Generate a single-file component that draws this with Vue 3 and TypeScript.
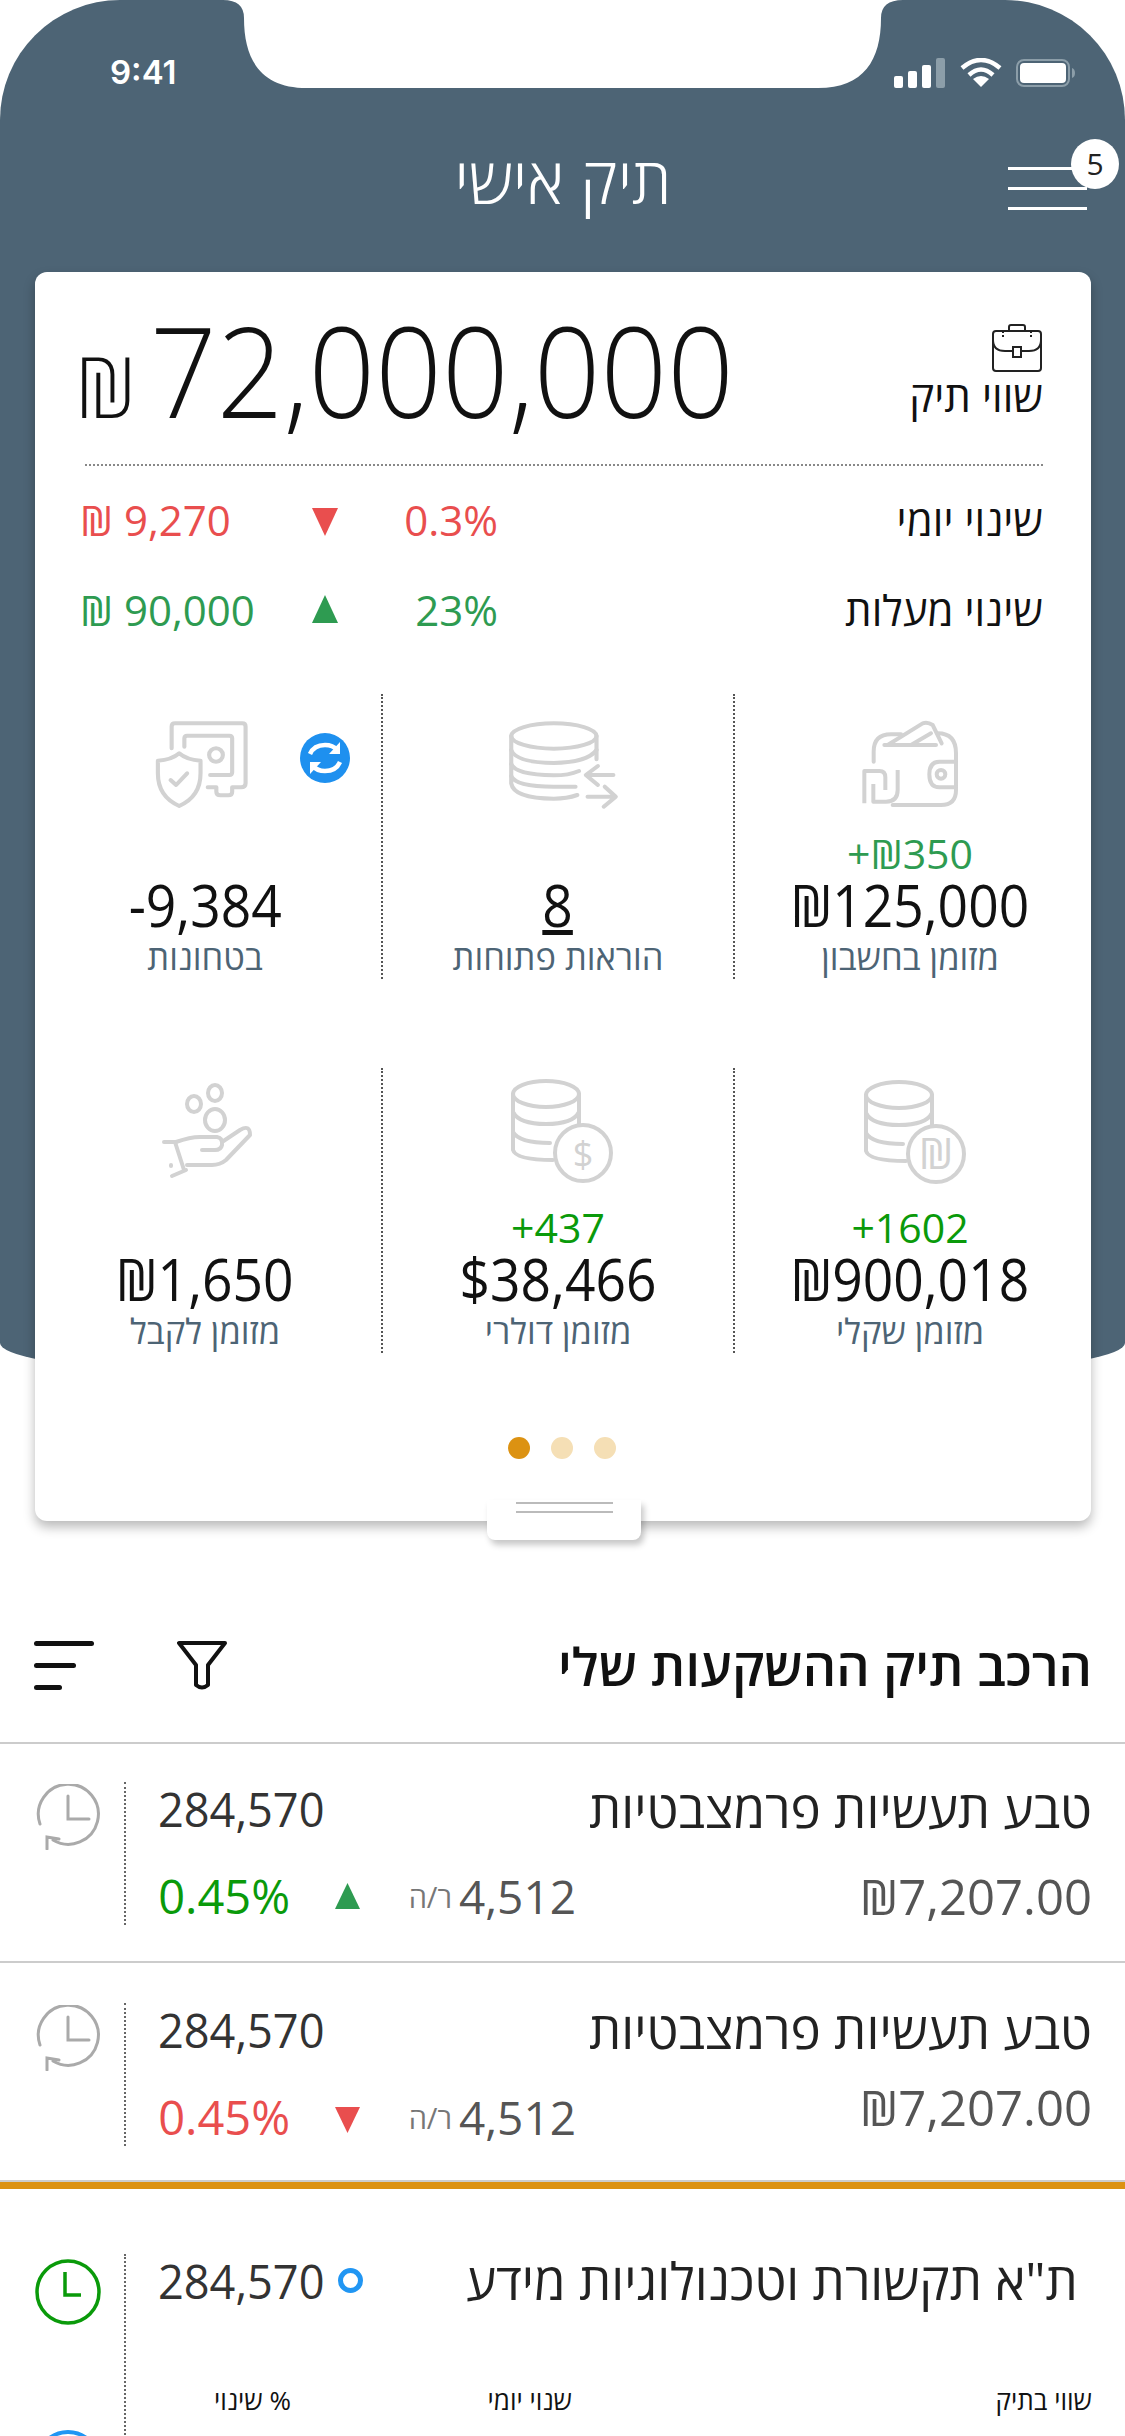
<script setup lang="ts">
interface Delta { label: string; pct: string; amount: string; dir: 'up' | 'down' }
interface Stat { icon: string; delta?: string; deltaClass?: string; value: string; label: string; link?: boolean; sync?: boolean }
interface Holding { name: string; units: string; worth: string; rate: string; pct: string; dir: 'up' | 'down'; raised?: boolean }

const deltas: Delta[] = [
  { label: 'שינוי יומי', pct: '0.3%', amount: '₪ 9,270', dir: 'down' },
  { label: 'שינוי מעלות', pct: '23%', amount: '₪ 90,000', dir: 'up' }
]

const stats: Stat[] = [
  { icon: 'wallet', delta: '+₪350', deltaClass: 'soft', value: '₪125,000', label: 'מזומן בחשבון' },
  { icon: 'orders', value: '8', label: 'הוראות פתוחות', link: true },
  { icon: 'safe', value: '-9,384', label: 'בטחונות', sync: true },
  { icon: 'ils', delta: '+1602', deltaClass: 'vivid', value: '₪900,018', label: 'מזומן שקלי' },
  { icon: 'usd', delta: '+437', deltaClass: 'vivid', value: '$38,466', label: 'מזומן דולרי' },
  { icon: 'hand', value: '₪1,650', label: 'מזומן לקבל' }
]

const holdings: Holding[] = [
  { name: 'טבע תעשיות פרמצבטיות', units: '284,570', worth: '₪7,207.00', rate: '4,512', pct: '0.45%', dir: 'up' },
  { name: 'טבע תעשיות פרמצבטיות', units: '284,570', worth: '₪7,207.00', rate: '4,512', pct: '0.45%', dir: 'down', raised: true }
]
</script>

<template>
  <div class="screen" dir="rtl">
    <header class="hero">
      <svg class="notch" viewBox="0 0 680 90" width="680" height="90">
        <path d="M0 0 Q21 0 21 18 C21 60 38 88 84 88 H595 C641 88 658 60 658 18 Q658 0 680 0 Z" fill="#fff" />
      </svg>

      <div class="status" dir="ltr">
        <span class="time">9:41</span>
        <div class="status-icons">
          <svg width="52" height="30" viewBox="0 0 52 30">
            <rect x="0" y="18" width="9" height="12" rx="2" fill="#fff" />
            <rect x="14" y="13" width="9" height="17" rx="2" fill="#fff" />
            <rect x="28" y="7" width="9" height="23" rx="2" fill="#fff" />
            <rect x="42" y="0" width="9" height="30" rx="2" fill="#8c9ea9" />
          </svg>
          <svg width="42" height="30" viewBox="0 0 42 30" fill="none" stroke="#fff" stroke-width="4.5">
            <path d="M2 10 Q21 -6 40 10" />
            <path d="M9 17 Q21 6 33 17" />
            <path d="M21 29 L13 21 Q21 15 29 21 Z" fill="#fff" stroke="none" />
          </svg>
          <svg width="60" height="30" viewBox="0 0 60 30">
            <rect x="1" y="2" width="52" height="26" rx="7" fill="none" stroke="#8c9ea9" stroke-width="2" />
            <rect x="4" y="5" width="46" height="20" rx="4" fill="#fff" />
            <path d="M56 10 Q59 11 59 15 Q59 19 56 20 Z" fill="#8c9ea9" />
          </svg>
        </div>
      </div>

      <nav class="nav" dir="ltr">
        <h1 class="title" dir="rtl">תיק אישי</h1>
        <div class="menu">
          <i></i><i></i><i></i>
          <span class="badge">5</span>
        </div>
      </nav>

      <section class="card">
        <div class="total">
          <div class="total-label">
            <svg width="52" height="48" viewBox="0 0 52 48" fill="none" stroke="#222" stroke-width="2">
              <path d="M18 7 V3 Q18 1 20 1 H32 Q34 1 34 3 V7" />
              <rect x="2" y="7" width="48" height="40" rx="3" />
              <path d="M2 16 Q2 27 14 27 H22 M30 27 H38 Q50 27 50 16" />
              <rect x="22" y="23" width="8" height="10" />
              <path d="M12 7 V13 M40 7 V13" stroke-dasharray="2 2" />
            </svg>
            <span>שווי תיק</span>
          </div>
          <div class="total-amount" dir="ltr"><span class="total-sign">₪</span><span class="total-digits">72,000,000</span></div>
        </div>

        <div v-for="d in deltas" :key="d.label" class="delta-row" :class="d.dir">
          <span class="delta-label">{{ d.label }}</span>
          <span class="delta-pct">{{ d.pct }}</span>
          <i class="tri" :class="d.dir"></i>
          <span class="delta-amount" dir="ltr">{{ d.amount }}</span>
        </div>

        <div class="stats">
          <div v-for="s in stats" :key="s.label" class="stat">
            <div class="stat-icon">
              <svg v-if="s.icon === 'wallet'" width="130" height="110" viewBox="72 60 390 330" fill="none" stroke="#d2d2d2" stroke-width="12" stroke-linecap="round" stroke-linejoin="round">
                <path d="M158 215 V185 Q158 133 210 133 H240" />
                <path d="M200 165 L305 100 Q320 95 335 105 L362 160 M270 165 L330 130 M190 165 H345" />
                <path d="M350 130 Q405 130 405 190 V300 Q405 345 360 345 H215" />
                <path d="M405 215 H355 Q325 215 325 253 Q325 292 355 292 H405" />
                <circle cx="360" cy="253" r="13" />
                <path d="M130 340 V243 H175 Q193 243 193 262 V300 M230 240 V300 Q230 335 195 335 H157 V282" stroke-linecap="butt" />
              </svg>
              <svg v-else-if="s.icon === 'orders'" width="130" height="110" viewBox="1080 60 378 330" preserveAspectRatio="none" fill="none" stroke="#d2d2d2" stroke-width="12" stroke-linecap="round" stroke-linejoin="round">
                <ellipse cx="1257" cy="138" rx="124" ry="38" />
                <path d="M1133 138 V280 Q1140 325 1257 326 Q1295 326 1325 315 M1381 138 V208" />
                <path d="M1133 180 Q1145 217 1257 219 Q1355 217 1381 180" />
                <path d="M1133 222 Q1145 254 1257 256 Q1300 256 1330 243" />
                <path d="M1133 258 Q1145 290 1257 290 H1320" />
                <path d="M1430 255 H1360 M1385 228 L1350 255 L1385 285 M1355 320 H1435 M1405 290 L1437 320 L1402 350" />
              </svg>
              <svg v-else-if="s.icon === 'safe'" width="130" height="110" viewBox="58 60 378 330" preserveAspectRatio="none" fill="none" stroke="#d2d2d2" stroke-width="12" stroke-linecap="round" stroke-linejoin="round">
                <path d="M150 175 V110 Q150 100 160 100 H355 Q365 100 365 110 V280 Q365 292 352 292 H326 V305 Q326 316 315 316 H292 Q280 316 280 305 V292 H255" />
                <path d="M187 170 V145 Q187 137 195 137 H318 Q326 137 326 145 V247 Q326 255 318 255 H262" />
                <circle cx="279" cy="195" r="20" />
                <path d="M172 190 Q150 210 110 212 V250 Q110 320 172 348 Q234 320 234 250 V212 Q194 210 172 190 Z" />
                <path d="M147 270 L163 285 L195 250" />
              </svg>
              <svg v-else-if="s.icon === 'hand'" width="130" height="110" viewBox="140 1075 130 110" fill="none" stroke="#d2d2d2" stroke-width="4" stroke-linecap="round" stroke-linejoin="round">
                <ellipse cx="215" cy="1093" rx="7" ry="8" />
                <ellipse cx="194" cy="1104" rx="7" ry="8" />
                <ellipse cx="215" cy="1120" rx="10" ry="11" />
                <path d="M164 1142 H175 L184 1170 M172 1176 L186 1170" />
                <path d="M176 1142 Q190 1137 200 1137 H217 Q223 1138 222 1145 Q221 1150 215 1150 H202" />
                <path d="M222 1142 L240 1130 Q250 1124 250 1135 L226 1160 Q220 1165 212 1165 H187" />
                <path d="M171 1165 V1166" />
              </svg>
              <svg v-else width="130" height="110" :viewBox="s.icon === 'usd' ? '492 1075 130 110' : '844 1075 130 110'" fill="none" stroke="#d2d2d2" stroke-width="4" stroke-linecap="round" stroke-linejoin="round">
                <g :transform="s.icon === 'usd' ? 'translate(0 0)' : 'translate(353 1)'">
                  <ellipse cx="545" cy="1094" rx="33" ry="13" />
                  <path d="M512 1094 V1150 Q515 1160 552 1160 M578 1094 V1128" />
                  <path d="M512 1112 Q518 1124 545 1124 Q572 1124 578 1112 M512 1132 Q518 1143 549 1143" />
                  <circle cx="582" cy="1153" r="28" fill="#fff" />
                  <text x="582" :y="s.icon === 'usd' ? 1167 : 1168" text-anchor="middle" class="coin-glyph" :class="{ big: s.icon === 'ils' }">{{ s.icon === 'usd' ? '$' : '₪' }}</text>
                </g>
              </svg>
            </div>
            <span v-if="s.sync" class="sync">
              <svg width="50" height="50" viewBox="0 0 50 50">
                <circle cx="25" cy="25" r="25" fill="#1e90ef" />
                <path d="M10 21 Q14 12 25 12 Q33 12 37 17" fill="none" stroke="#fff" stroke-width="4.5" />
                <path d="M40 9 V21 H29 Z" fill="#fff" />
                <path d="M40 29 Q36 38 25 38 Q17 38 13 33" fill="none" stroke="#fff" stroke-width="4.5" />
                <path d="M10 41 V29 H21 Z" fill="#fff" />
              </svg>
            </span>
            <span v-if="s.delta" class="stat-delta" :class="s.deltaClass" dir="ltr">{{ s.delta }}</span>
            <span class="stat-value" :class="{ link: s.link, lone: !s.delta }" dir="ltr">{{ s.value }}</span>
            <span class="stat-label">{{ s.label }}</span>
          </div>
        </div>

        <div class="dots" dir="ltr"><i class="on"></i><i></i><i></i></div>
        <div class="handle"><i></i><i></i></div>
      </section>
    </header>

    <div class="section-head">
      <h2>הרכב תיק ההשקעות שלי</h2>
      <div class="tools">
        <svg width="50" height="50" viewBox="0 0 50 50" fill="none" stroke="#111" stroke-width="4" stroke-linejoin="round">
          <path d="M2 3 H48 L31 25 V45 Q25 50 19 45 V25 Z" />
        </svg>
        <div class="sort"><i></i><i></i><i></i></div>
      </div>
    </div>

    <div v-for="(h, i) in holdings" :key="i" class="holding">
      <div class="holding-main">
        <div class="line">
          <span class="name">{{ h.name }}</span>
          <span class="units">{{ h.units }}</span>
        </div>
        <div class="line">
          <span class="worth" :class="{ raised: h.raised }" dir="ltr">{{ h.worth }}</span>
          <div class="rate-group" :class="h.dir">
            <span class="rate">{{ h.rate }}</span>
            <span class="per">ר/ה</span>
            <i class="tri small" :class="h.dir"></i>
            <span class="pct">{{ h.pct }}</span>
          </div>
        </div>
      </div>
      <div class="clock-cell">
        <svg width="64" height="66" viewBox="0 0 64 66" fill="none" stroke="#aaa" stroke-width="3" stroke-linecap="round">
          <path d="M17 56 A30 30 0 1 0 4 40" />
          <path d="M32 12 V35 H53" />
          <path d="M11 65 L11 53 L23 55" />
        </svg>
      </div>
    </div>

    <div class="holding active">
      <div class="holding-main">
        <div class="line">
          <span class="name">ת"א תקשורת וטכנולוגיות מידע</span>
          <div class="units-wrap">
            <i class="ring"></i>
            <span class="units">284,570</span>
          </div>
        </div>
        <div class="captions">
          <span>שווי בתיק</span>
          <span>שנוי יומי</span>
          <span>% שינוי</span>
        </div>
      </div>
      <div class="clock-cell">
        <svg width="66" height="66" viewBox="0 0 66 66" fill="none" stroke="#0a9a0a" stroke-width="3.5">
          <circle cx="33" cy="33" r="31" />
          <path d="M30 13 V36 H46" />
        </svg>
        <svg class="next-clock" width="66" height="66" viewBox="0 0 66 66" fill="none" stroke="#2196f3" stroke-width="4">
          <circle cx="33" cy="33" r="31" />
        </svg>
      </div>
    </div>
  </div>
</template>

<style>
html, body {
  margin: 0;
  background: #fff;
}
</style>

<style scoped>
.screen {
  position: relative;
  width: 1125px;
  height: 2436px;
  overflow: hidden;
  background: #fff;
  font-family: "Open Sans", "Liberation Sans", sans-serif;
  color: #111;
}
h1, h2 { margin: 0; font-weight: inherit; font-size: inherit; }
i { display: block; font-style: normal; }

.hero {
  position: relative;
  height: 1389px;
  padding: 0 34px 0 35px;
  box-sizing: border-box;
  background: #4d6475;
  border-radius: 120px 120px 50% 50% / 120px 120px 46px 46px;
}
.notch {
  position: absolute;
  top: 0;
  left: 223px;
}
.status {
  display: flex;
  justify-content: space-between;
  align-items: flex-end;
  height: 88px;
  padding: 0 15px 0 75px;
  color: #fff;
}
.time {
  font-family: Inter, "Liberation Sans", sans-serif;
  font-weight: 600;
  font-size: 33px;
  line-height: 32px;
}
.status-icons {
  display: flex;
  align-items: flex-end;
  gap: 14px;
}
.nav {
  position: relative;
  height: 184px;
  display: flex;
  justify-content: center;
}
.title {
  color: #fff;
  font-weight: 300;
  font-size: 64px;
  line-height: 60px;
  margin-top: 62px;
}
.menu {
  position: absolute;
  right: 4px;
  top: 79px;
  width: 79px;
  display: flex;
  flex-direction: column;
  gap: 17px;
}
.menu i {
  height: 3px;
  background: #fff;
}
.badge {
  position: absolute;
  right: -32px;
  top: -28px;
  width: 48px;
  height: 50px;
  border-radius: 50%;
  background: #fff;
  color: #222;
  font-size: 30px;
  line-height: 50px;
  text-align: center;
}

.card {
  position: relative;
  height: 1249px;
  padding: 0 48px 0 45px;
  box-sizing: border-box;
  background: #fff;
  border-radius: 12px;
  box-shadow: 0 6px 12px rgba(0, 0, 0, 0.28);
}
.total {
  display: flex;
  justify-content: space-between;
  align-items: flex-end;
  height: 194px;
  padding: 0 0 14px 5px;
  box-sizing: border-box;
  border-bottom: 2px dotted #888;
  margin-left: 5px;
}
.total-label {
  display: flex;
  flex-direction: column;
  align-items: flex-start;
  font-size: 42px;
  line-height: 52px;
  padding-bottom: 28px;
}
.total-label svg { margin-bottom: -2px; }
.total-amount {
  font-weight: 300;
  font-size: 125px;
  line-height: 130px;
  margin-left: -15px;
}
.total-sign { font-size: 85px; }
.total-digits {
  display: inline-block;
  margin-left: 14px;
  transform: scaleX(0.935);
  transform-origin: left center;
}

.delta-row {
  display: grid;
  grid-template-columns: 545px 160px 26px 1fr;
  align-items: center;
  height: 90px;
  font-size: 42px;
}
.delta-row.down { color: #e94e4e; margin-top: 8px; }
.delta-row.up { color: #2e9b51; }
.delta-label { color: #111; }
.delta-pct, .delta-amount { font-weight: 500; }
.delta-amount { text-align: left; }

.tri {
  width: 26px;
  height: 28px;
  background: currentColor;
}
.tri.down { clip-path: polygon(0 0, 100% 0, 50% 100%); margin-top: 6px; }
.tri.up { clip-path: polygon(50% 0, 100% 100%, 0 100%); }
.tri.small { width: 25px; height: 26px; }

.stats {
  display: grid;
  grid-template-columns: repeat(3, 352px);
  grid-auto-rows: 285px;
  row-gap: 89px;
  margin: 40px -42px 0 -51px;
  justify-content: center;
}
.stat {
  position: relative;
  display: flex;
  flex-direction: column;
  align-items: center;
  border-left: 2px dotted #555;
  padding-top: 16px;
  padding-bottom: 3px;
}
.stat:nth-child(3n) { border-left: none; }
.stat:nth-child(n+4) { padding-top: 7px; }
.stat-icon { height: 110px; }
.stat-delta {
  margin-top: auto;
  font-size: 41px;
  line-height: 44px;
}
.stat-delta.soft { color: #2e9b51; }
.stat-delta.vivid { color: #0a9a0a; }
.stat-value {
  font-size: 58px;
  line-height: 60px;
  margin-bottom: 3px;
  transform: scaleX(0.92);
}
.stat-value.lone { margin-top: auto; }
.stat-value.link { text-decoration: underline; }
.stat-label {
  color: #4d6475;
  font-size: 34.5px;
  line-height: 38px;
}
.sync {
  position: absolute;
  right: 31px;
  top: 39px;
  line-height: 0;
}
.coin-glyph {
  fill: #d2d2d2;
  stroke: none;
  font-size: 36px;
}
.coin-glyph.big { font-size: 44px; }

.dots {
  display: flex;
  justify-content: center;
  gap: 21px;
  margin-top: 84px;
}
.dots i {
  width: 22px;
  height: 22px;
  border-radius: 50%;
  background: #f5dfb5;
}
.dots i.on { background: #dc9212; }
.handle {
  position: absolute;
  left: 452px;
  bottom: -19px;
  width: 154px;
  height: 40px;
  padding-top: 2px;
  box-sizing: border-box;
  background: #fff;
  border-radius: 0 0 8px 8px;
  box-shadow: 3px 5px 6px rgba(0, 0, 0, 0.22);
}
.handle i {
  width: 97px;
  height: 2px;
  margin: 0 auto 7px;
  background: #bbb;
}

.section-head {
  display: flex;
  justify-content: space-between;
  align-items: center;
  height: 144px;
  margin-top: 211px;
  padding: 0 33px 12px 34px;
  box-sizing: border-box;
  border-bottom: 2px solid #ccc;
}
.section-head h2 {
  font-size: 52px;
  font-weight: 600;
}
.tools {
  display: flex;
  align-items: center;
  gap: 83px;
}
.sort {
  display: flex;
  flex-direction: column;
  align-items: flex-start;
  gap: 17px;
  width: 60px;
  direction: ltr;
}
.sort i { height: 5px; background: #111; border-radius: 3px; }
.sort i:nth-child(1) { width: 60px; }
.sort i:nth-child(2) { width: 42px; }
.sort i:nth-child(3) { width: 28px; }

.holding {
  display: flex;
  height: 219px;
  padding-top: 38px;
  box-sizing: border-box;
  border-bottom: 2px solid #ccc;
}
.holding + .holding { padding-top: 40px; }
.holding-main {
  flex: 1;
  padding: 0 33px 0 32px;
  margin-top: -4px;
}
.clock-cell {
  display: flex;
  flex-direction: column;
  align-items: center;
  width: 126px;
  height: 143px;
  padding-left: 12px;
  padding-top: 2px;
  box-sizing: border-box;
  border-right: 2px dotted #666;
}
.line {
  display: flex;
  justify-content: space-between;
  align-items: center;
  height: 60px;
}
.line + .line { margin-top: 28px; }
.name {
  font-size: 51px;
  color: #222;
}
.units {
  font-size: 48px;
  color: #333;
  transform: scaleX(0.94);
  transform-origin: left center;
}
.worth {
  font-size: 49px;
  color: #555;
}
.worth.raised { margin-bottom: 20px; }
.rate-group {
  display: grid;
  grid-template-columns: 111px 13px 44px 48px 25px 45px 132px;
  align-items: center;
  width: 418px;
}
.rate-group .rate { grid-column: 1; font-size: 46px; color: #555; }
.rate-group .per { grid-column: 3; font-size: 29px; color: #777; }
.rate-group .tri { grid-column: 5; }
.rate-group .pct { grid-column: 7; font-size: 47px; }
.rate-group.up { color: #2e9b51; }
.rate-group.up .pct { color: #0a9a0a; }
.rate-group.down { color: #e94e4e; }

.holding.active {
  height: 260px;
  border-top: 7px solid #dc9212;
  border-bottom: none;
  padding-top: 65px;
}
.active .holding-main { padding-right: 47px; }
.active .clock-cell {
  height: 300px;
  padding-top: 5px;
}
.next-clock { margin-top: 105px; }
.units-wrap {
  display: flex;
  align-items: center;
  gap: 3px;
}
.ring {
  width: 15px;
  height: 15px;
  border: 5px solid #2196f3;
  border-radius: 50%;
}
.captions {
  display: grid;
  grid-template-columns: 520px 281px 1fr;
  margin-top: 72px;
  margin-right: -14px;
  font-size: 26px;
  line-height: 36px;
}
</style>
